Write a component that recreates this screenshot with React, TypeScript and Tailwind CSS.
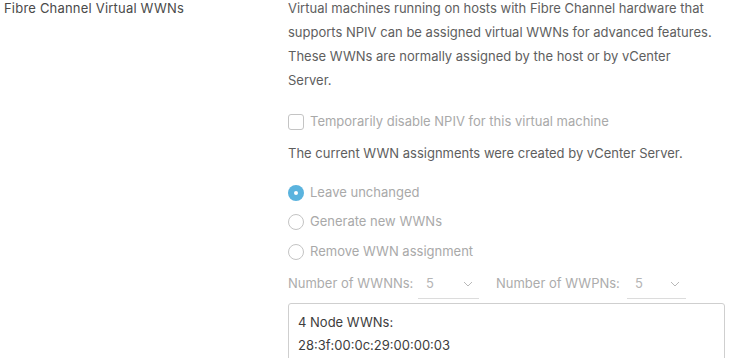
import React from "react";

function Chevron() {
  return (
    <svg width="10" height="6" viewBox="0 0 10 6" fill="none">
      <polyline points="1,1 5,5 9,1" stroke="#b9b9b9" strokeWidth="1" />
    </svg>
  );
}

function Radio({ checked, label }: { checked?: boolean; label: string }) {
  return (
    <div className="flex items-center h-[24px]">
      {checked ? (
        <span className="w-[16px] h-[16px] rounded-full bg-[#5ab3de] flex items-center justify-center">
          <span className="w-[4px] h-[4px] rounded-full bg-white" />
        </span>
      ) : (
        <span className="w-[16px] h-[16px] rounded-full border border-[#c4c4c4] bg-white" />
      )}
      <span className="ml-[6px] text-[#a9a9a9]">{label}</span>
    </div>
  );
}

function Select({ value, w }: { value: string; w: string }) {
  return (
    <div className={`${w} h-[29px] border-b border-[#dcdcdc] flex items-center justify-between pl-[8px] pr-[6px]`}>
      <span className="text-[#b5b5b5]">{value}</span>
      <Chevron />
    </div>
  );
}

export default function App() {
  return (
    <div
      className="w-[730px] h-[358px] overflow-hidden bg-white flex text-[13px]"
      style={{ fontFamily: "Inter, 'Noto Sans', sans-serif" }}
    >
      <div className="w-[288px] shrink-0 pl-[4px]">
        <div className="leading-[24px] -mt-[4px] text-[#4a4a4a] tracking-[0.2px]">Fibre Channel Virtual WWNs</div>
      </div>
      <div className="flex-1 pr-[5px] flex flex-col">
        <p className="leading-[24px] -mt-[4px] text-[#5e5e5e] w-[436px]">
          Virtual machines running on hosts with Fibre Channel hardware that supports NPIV can be assigned virtual WWNs for advanced features. These WWNs are normally assigned by the host or by vCenter
          <br />
          Server.
        </p>
        <div className="mt-[20px] flex items-center h-[24px]">
          <span className="w-[16px] h-[16px] rounded-[3px] border border-[#c4c4c4] bg-white" />
          <span className="ml-[6px] text-[#a9a9a9]">Temporarily disable NPIV for this virtual machine</span>
        </div>
        <div className="mt-[9px] leading-[24px] text-[#5e5e5e]">
          The current WWN assignments were created by vCenter Server.
        </div>
        <div className="mt-[16px] flex flex-col gap-[5.5px]">
          <Radio checked label="Leave unchanged" />
          <Radio label="Generate new WWNs" />
          <Radio label="Remove WWN assignment" />
        </div>
        <div className="mt-[6px] flex items-center">
          <div className="w-[130px] h-[29px] flex items-center text-[#acacac]">Number of WWNNs:</div>
          <Select value="5" w="w-[61px]" />
          <div className="ml-[17px] w-[131px] h-[29px] flex items-center text-[#acacac]">Number of WWPNs:</div>
          <Select value="5" w="w-[59px]" />
        </div>
        <div className="mt-[4px] h-[80px] shrink-0 border border-[#cfcfcf] rounded-[3px] px-[9px] pt-[7px] leading-[23.5px] text-[#3d3d3d]">
          <div>4 Node WWNs:</div>
          <div>28:3f:00:0c:29:00:00:03</div>
        </div>
      </div>
    </div>
  );
}
